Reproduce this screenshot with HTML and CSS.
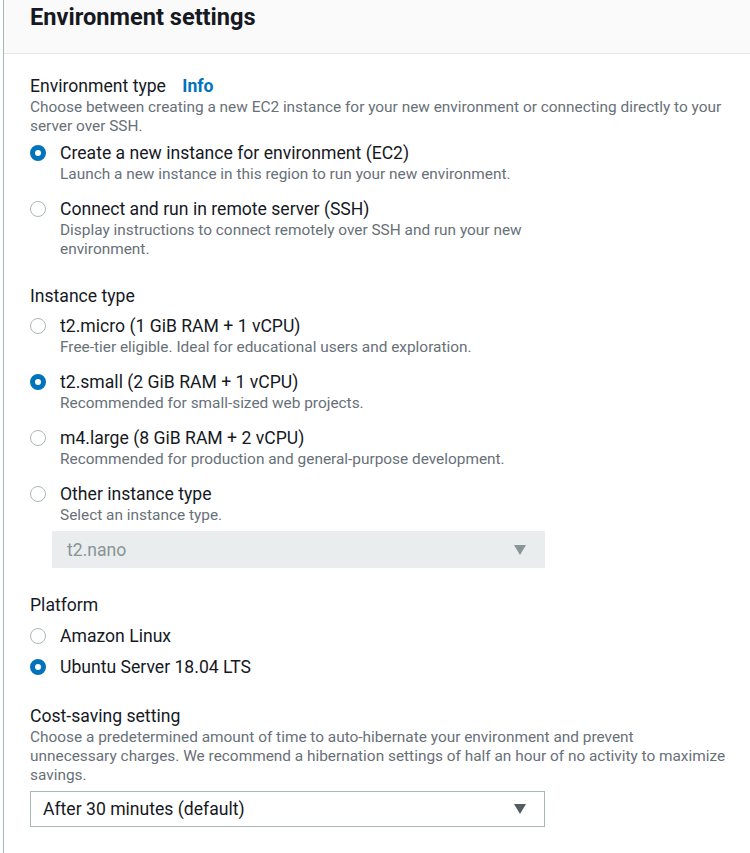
FILE: index.html
```html
<!DOCTYPE html>
<html>
<head>
<meta charset="utf-8">
<title>Environment settings</title>
<link rel="stylesheet" href="styles.css">
</head>
<body>
<div class="panel">
  <div class="panel-header">
    <h2 class="panel-title">Environment settings</h2>
  </div>
  <div class="panel-body">
    <div class="field">
      <div class="field-label">Environment type <span class="info">Info</span></div>
      <div class="field-desc">Choose between creating a new EC2 instance for your new environment or connecting directly to your server over SSH.</div>
      <div class="radio-group">
        <div class="radio-item">
          <span class="radio checked"></span>
          <div class="radio-text">
            <div class="radio-label">Create a new instance for environment (EC2)</div>
            <div class="radio-desc">Launch a new instance in this region to run your new environment.</div>
          </div>
        </div>
        <div class="radio-item">
          <span class="radio"></span>
          <div class="radio-text">
            <div class="radio-label">Connect and run in remote server (SSH)</div>
            <div class="radio-desc narrow">Display instructions to connect remotely over SSH and run your new environment.</div>
          </div>
        </div>
      </div>
    </div>

    <div class="field">
      <div class="field-label">Instance type</div>
      <div class="radio-group spaced">
        <div class="radio-item">
          <span class="radio"></span>
          <div class="radio-text">
            <div class="radio-label">t2.micro (1 GiB RAM + 1 vCPU)</div>
            <div class="radio-desc">Free-tier eligible. Ideal for educational users and exploration.</div>
          </div>
        </div>
        <div class="radio-item">
          <span class="radio checked"></span>
          <div class="radio-text">
            <div class="radio-label">t2.small (2 GiB RAM + 1 vCPU)</div>
            <div class="radio-desc">Recommended for small-sized web projects.</div>
          </div>
        </div>
        <div class="radio-item">
          <span class="radio"></span>
          <div class="radio-text">
            <div class="radio-label">m4.large (8 GiB RAM + 2 vCPU)</div>
            <div class="radio-desc">Recommended for production and general-purpose development.</div>
          </div>
        </div>
        <div class="radio-item">
          <span class="radio"></span>
          <div class="radio-text">
            <div class="radio-label">Other instance type</div>
            <div class="radio-desc">Select an instance type.</div>
          </div>
        </div>
      </div>
      <div class="select disabled sub">
        <span class="select-value">t2.nano</span>
        <span class="caret"></span>
      </div>
    </div>

    <div class="field">
      <div class="field-label">Platform</div>
      <div class="radio-group compact">
        <div class="radio-item">
          <span class="radio"></span>
          <div class="radio-text">
            <div class="radio-label">Amazon Linux</div>
          </div>
        </div>
        <div class="radio-item">
          <span class="radio checked"></span>
          <div class="radio-text">
            <div class="radio-label">Ubuntu Server 18.04 LTS</div>
          </div>
        </div>
      </div>
    </div>

    <div class="field wide">
      <div class="field-label">Cost-saving setting</div>
      <div class="field-desc">Choose a predetermined amount of time to auto-hibernate your environment and prevent<br>unnecessary charges. We recommend a hibernation settings of half an hour of no activity to maximize savings.</div>
      <div class="select main">
        <span class="select-value">After 30 minutes (default)</span>
        <span class="caret"></span>
      </div>
    </div>
  </div>
</div>
</body>
</html>
```

FILE: styles.css
```css
* { box-sizing: border-box; }

body {
  margin: 0;
  background: #ffffff;
  font-family: Roboto, "Noto Sans", Arial, sans-serif;
  color: #16191f;
}

.panel {
  margin-left: 3px;
  border-left: 1px solid #aab7b8;
  min-height: 853px;
  width: 760px;
}

.panel-header {
  height: 54px;
  background: #fafafa;
  border-bottom: 1px solid #e6e6e6;
  padding: 2px 0 0 26px;
}

.panel-title {
  margin: 0;
  font-size: 23.6px;
  line-height: 30px;
  font-weight: 700;
  color: #16191f;
}

.panel-body {
  padding: 20px 0 0 26px;
  display: flex;
  flex-direction: column;
  gap: 25px;
}

.field {
  display: flex;
  flex-direction: column;
  width: 700px;
}

.field.wide { width: 708px; }

.field-label {
  font-size: 17.6px;
  line-height: 24px;
  color: #16191f;
}

.info {
  margin-left: 12px;
  color: #0073bb;
  font-weight: 700;
}

.field-desc {
  font-size: 15.4px;
  line-height: 19px;
  color: #687078;
}

.radio-group {
  display: flex;
  flex-direction: column;
  gap: 13px;
  margin-top: 5px;
}

.radio-group.spaced { margin-top: 6px; }

.radio-group.compact {
  gap: 7px;
  margin-top: 7px;
}

.radio-item {
  display: flex;
  align-items: flex-start;
  gap: 14px;
}

.radio {
  flex: none;
  width: 16px;
  height: 16px;
  margin-top: 4px;
  border-radius: 50%;
  border: 1px solid #aab7b8;
  background: #ffffff;
}

.radio.checked {
  border: 5px solid #0073bb;
}

.radio-text {
  display: flex;
  flex-direction: column;
}

.radio-label {
  font-size: 17.6px;
  line-height: 24px;
  color: #16191f;
}

.radio-desc {
  font-size: 15.4px;
  line-height: 19px;
  color: #687078;
}

.radio-desc.narrow { width: 480px; }

.select {
  display: flex;
  align-items: center;
  justify-content: space-between;
  width: 515px;
  height: 36px;
  border: 1px solid #aab7b8;
  background: #ffffff;
  padding: 0 18px 0 12px;
  font-size: 17.6px;
}

.select.sub {
  margin-top: 6px;
  margin-left: 22px;
  width: 493px;
  height: 37px;
  padding-left: 14px;
}

.select.main { margin-top: 6px; }

.select.disabled {
  background: #eaeded;
  border-color: #eaeded;
  color: #879596;
}

.select-value { line-height: 24px; }

.caret {
  width: 0;
  height: 0;
  border-left: 6.5px solid transparent;
  border-right: 6.5px solid transparent;
  border-top: 10px solid #545b64;
}

.select.disabled .caret { border-top-color: #879596; }
```
